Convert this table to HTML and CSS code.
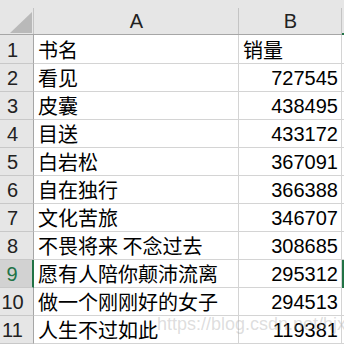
FILE: index.html
```html
<!DOCTYPE html>
<html lang="zh-CN">
<head>
<meta charset="utf-8">
<link rel="stylesheet" href="styles.css">
</head>
<body>
<div class="sheet">
  <div class="corner"><svg class="tri" width="22" height="21" viewBox="0 0 22 21"><polygon points="0,21 22,0 22,21" fill="#b9b9b9"/></svg></div>
  <div class="colhead">A</div>
  <div class="colhead">B</div>
  <div class="colhead edge"></div>

  <div class="rowhead">1</div><div class="cell">书名</div><div class="cell">销量</div><div class="edge-cell"></div>
  <div class="rowhead">2</div><div class="cell">看见</div><div class="cell num">727545</div><div class="edge-cell"></div>
  <div class="rowhead">3</div><div class="cell">皮囊</div><div class="cell num">438495</div><div class="edge-cell"></div>
  <div class="rowhead">4</div><div class="cell">目送</div><div class="cell num">433172</div><div class="edge-cell"></div>
  <div class="rowhead">5</div><div class="cell">白岩松</div><div class="cell num">367091</div><div class="edge-cell"></div>
  <div class="rowhead">6</div><div class="cell">自在独行</div><div class="cell num">366388</div><div class="edge-cell"></div>
  <div class="rowhead">7</div><div class="cell">文化苦旅</div><div class="cell num">346707</div><div class="edge-cell"></div>
  <div class="rowhead">8</div><div class="cell">不畏将来 不念过去</div><div class="cell num">308685</div><div class="edge-cell"></div>
  <div class="rowhead active">9</div><div class="cell">愿有人陪你颠沛流离</div><div class="cell num">295312</div><div class="edge-cell selected"></div>
  <div class="rowhead">10</div><div class="cell">做一个刚刚好的女子</div><div class="cell num">294513</div><div class="edge-cell"></div>
  <div class="rowhead">11</div><div class="cell">人生不过如此</div><div class="cell num">119381</div><div class="edge-cell"></div>

  <div class="watermark">https://blog.csdn.net/hjx</div>
</div>
</body>
</html>
```

FILE: styles.css
```css
* { box-sizing: border-box; }
html, body { margin: 0; padding: 0; background: #fff; }
body { width: 344px; height: 344px; overflow: hidden; }

.sheet {
  position: relative;
  display: grid;
  grid-template-columns: 34px 205px 103px 2px;
  grid-template-rows: 35px 29px repeat(10, 28px);
  font-family: "Liberation Sans", "Noto Sans CJK SC", sans-serif;
  font-size: 20px;
  line-height: 20px;
  color: #000;
}

.corner, .colhead {
  position: relative;
  background: #e6e6e6;
  border-bottom: 1px solid #a6a6a6;
}
.corner::after, .colhead::after {
  content: "";
  position: absolute;
  right: 0;
  top: 8px;
  bottom: 0;
  width: 1px;
  background: #c4c4c4;
}
.corner .tri { position: absolute; left: 10px; top: 12px; }

.colhead {
  display: flex;
  align-items: flex-end;
  justify-content: center;
  padding-bottom: 3px;
  color: #222;
}
.colhead.edge { border-bottom: 2px solid #217346; }
.colhead.edge::after { display: none; }

.rowhead {
  background: #e6e6e6;
  border-right: 1px solid #a6a6a6;
  border-bottom: 1px solid #c8c8c8;
  display: flex;
  align-items: flex-end;
  justify-content: center;
  padding: 0 8px 3px 0;
  color: #222;
}
.rowhead.active {
  background: #d2d2d2;
  color: #217346;
  border-right: 2px solid #217346;
}

.cell {
  border-right: 1px solid #d4d4d4;
  border-bottom: 1px solid #d4d4d4;
  display: flex;
  align-items: flex-end;
  padding: 0 4px 3px 4px;
  white-space: nowrap;
  overflow: hidden;
  font-family: "Noto Sans CJK SC", sans-serif;
}
.cell.num {
  justify-content: flex-end;
  padding-right: 3px;
  font-family: "Liberation Sans", sans-serif;
}

.edge-cell { border-bottom: 1px solid #d4d4d4; }
.edge-cell.selected { background: #217346; border-bottom: 0; }

.watermark {
  position: absolute;
  left: 157px;
  top: 314px;
  font-family: "Liberation Sans", sans-serif;
  font-size: 18px;
  line-height: 20px;
  color: rgba(170, 170, 170, 0.4);
  white-space: nowrap;
  pointer-events: none;
}
```
